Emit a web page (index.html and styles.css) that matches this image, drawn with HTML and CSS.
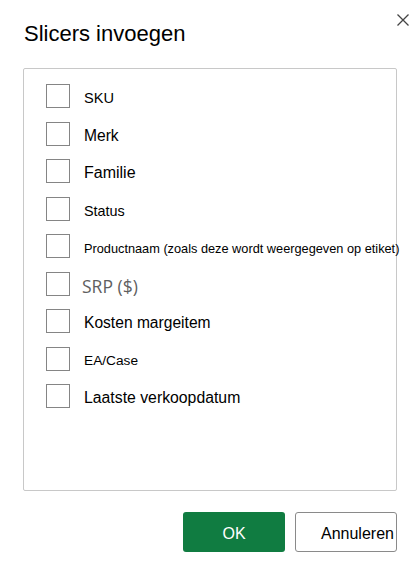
FILE: index.html
```html
<!DOCTYPE html>
<html lang="nl">
<head>
<meta charset="utf-8">
<title>Slicers invoegen</title>
<link rel="stylesheet" href="styles.css">
</head>
<body>
<div class="dialog">
  <h1 class="title">Slicers invoegen</h1>
  <button class="close" aria-label="Sluiten">
    <svg width="12" height="12" viewBox="0 0 12 12"><path d="M0.5 0.5 L11.5 11.5 M11.5 0.5 L0.5 11.5" stroke="#444" stroke-width="1.3" fill="none"/></svg>
  </button>
  <div class="panel">
    <ul class="list">
      <li class="row"><span class="box"></span><span class="label s-sku">SKU</span></li>
      <li class="row"><span class="box"></span><span class="label s-merk">Merk</span></li>
      <li class="row"><span class="box"></span><span class="label s-fam">Familie</span></li>
      <li class="row"><span class="box"></span><span class="label s-status">Status</span></li>
      <li class="row"><span class="box"></span><span class="label s-prod">Productnaam (zoals deze wordt weergegeven op etiket)</span></li>
      <li class="row"><span class="box"></span><span class="label s-srp">SRP ($)</span></li>
      <li class="row"><span class="box"></span><span class="label s-kost">Kosten margeitem</span></li>
      <li class="row"><span class="box"></span><span class="label s-ea">EA/Case</span></li>
      <li class="row"><span class="box"></span><span class="label s-laat">Laatste verkoopdatum</span></li>
    </ul>
  </div>
  <div class="footer">
    <button class="btn btn-primary">OK</button>
    <button class="btn btn-secondary">Annuleren</button>
  </div>
</div>
</body>
</html>
```
FILE: styles.css
```css
html, body {
  margin: 0;
  padding: 0;
  background: #ffffff;
}
body {
  font-family: "Liberation Sans", Arial, sans-serif;
  color: #000;
}
.dialog {
  position: relative;
  width: 418px;
  height: 577px;
  box-sizing: border-box;
  padding: 20px 21px 0 23px;
}
.title {
  margin: 0 0 0 1px;
  font-size: 22px;
  line-height: 28px;
  font-weight: normal;
  color: #000;
}
.close {
  position: absolute;
  top: 13px;
  left: 396px;
  width: 13px;
  height: 13px;
  padding: 0;
  border: 0;
  background: transparent;
  display: flex;
  align-items: center;
  justify-content: center;
}
.panel {
  margin-top: 20px;
  height: 423px;
  box-sizing: border-box;
  border: 1px solid #c8c8c8;
  border-radius: 2px;
}
.list {
  list-style: none;
  margin: 0;
  padding: 15px 0 0 22px;
  display: flex;
  flex-direction: column;
  gap: 13.5px;
}
.row {
  display: flex;
  align-items: center;
  height: 24px;
  white-space: nowrap;
}
.box {
  flex: none;
  width: 24px;
  height: 24px;
  box-sizing: border-box;
  border: 1px solid #858585;
  background: #fff;
}
.label {
  margin-left: 14px;
  padding-top: 4px;
  color: #000;
}
.s-sku { font-size: 14.6px; }
.s-merk { font-size: 15.6px; }
.s-fam { font-size: 16px; }
.s-status { font-size: 14.4px; }
.s-prod { font-size: 12.75px; }
.s-srp {
  font-family: "Open Sans", "Noto Sans", sans-serif;
  font-size: 17.5px;
  color: #5f5f5f;
  margin-left: 12px;
  padding-top: 5px;
}
.s-kost { font-size: 15.6px; }
.s-ea { font-size: 13.7px; }
.s-laat { font-size: 15.8px; }
.footer {
  margin-top: 21px;
  display: flex;
  justify-content: flex-end;
  gap: 10px;
}
.btn {
  width: 102px;
  height: 40px;
  box-sizing: border-box;
  border-radius: 3px;
  font-family: "Liberation Sans", Arial, sans-serif;
  font-size: 16px;
  white-space: nowrap;
}
.btn-primary {
  background: #107c41;
  color: #fff;
  border: 0;
  text-align: center;
  padding: 3px 0 0 0;
}
.btn-secondary {
  background: #fff;
  color: #000;
  border: 1px solid #8a8a8a;
  text-align: left;
  padding: 3px 0 0 25px;
  overflow: visible;
}
```
